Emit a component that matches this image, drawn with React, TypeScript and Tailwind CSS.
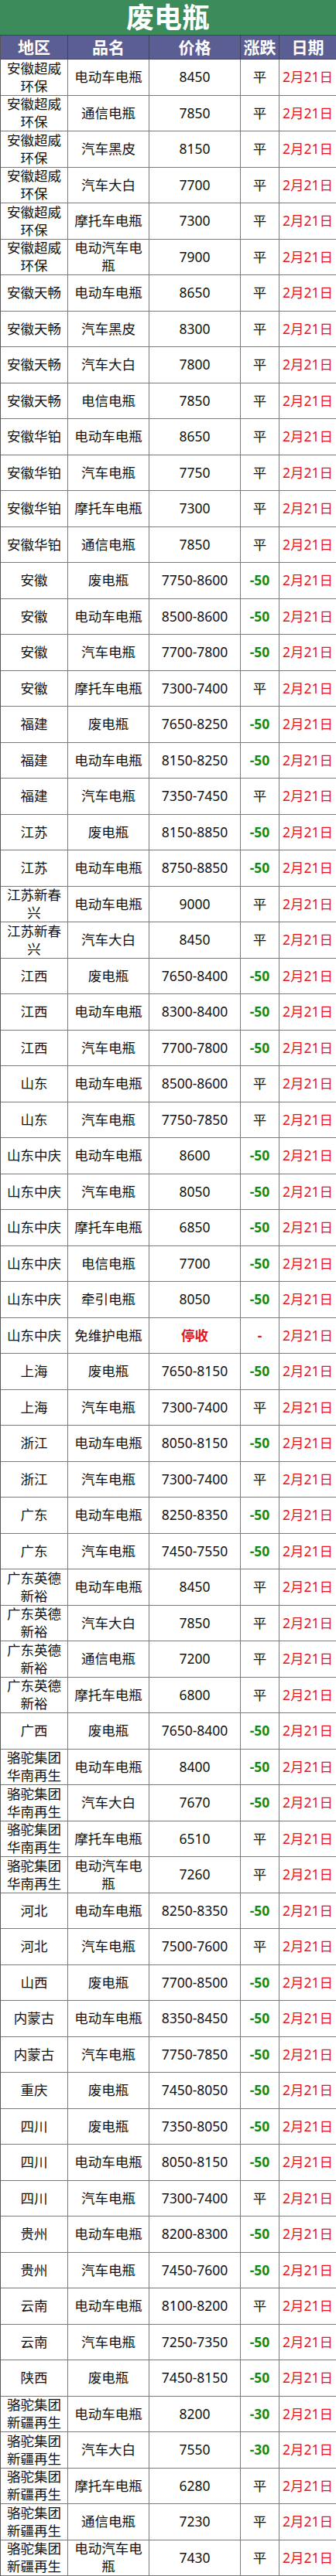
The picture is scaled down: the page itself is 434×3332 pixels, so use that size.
import React from 'react';

type Row = [string, string, string, string];

const rows: Row[] = [
  ['安徽超威环保', '电动车电瓶', '8450', '平'],
  ['安徽超威环保', '通信电瓶', '7850', '平'],
  ['安徽超威环保', '汽车黑皮', '8150', '平'],
  ['安徽超威环保', '汽车大白', '7700', '平'],
  ['安徽超威环保', '摩托车电瓶', '7300', '平'],
  ['安徽超威环保', '电动汽车电瓶', '7900', '平'],
  ['安徽天畅', '电动车电瓶', '8650', '平'],
  ['安徽天畅', '汽车黑皮', '8300', '平'],
  ['安徽天畅', '汽车大白', '7800', '平'],
  ['安徽天畅', '电信电瓶', '7850', '平'],
  ['安徽华铂', '电动车电瓶', '8650', '平'],
  ['安徽华铂', '汽车电瓶', '7750', '平'],
  ['安徽华铂', '摩托车电瓶', '7300', '平'],
  ['安徽华铂', '通信电瓶', '7850', '平'],
  ['安徽', '废电瓶', '7750-8600', '-50'],
  ['安徽', '电动车电瓶', '8500-8600', '-50'],
  ['安徽', '汽车电瓶', '7700-7800', '-50'],
  ['安徽', '摩托车电瓶', '7300-7400', '平'],
  ['福建', '废电瓶', '7650-8250', '-50'],
  ['福建', '电动车电瓶', '8150-8250', '-50'],
  ['福建', '汽车电瓶', '7350-7450', '平'],
  ['江苏', '废电瓶', '8150-8850', '-50'],
  ['江苏', '电动车电瓶', '8750-8850', '-50'],
  ['江苏新春兴', '电动车电瓶', '9000', '平'],
  ['江苏新春兴', '汽车大白', '8450', '平'],
  ['江西', '废电瓶', '7650-8400', '-50'],
  ['江西', '电动车电瓶', '8300-8400', '-50'],
  ['江西', '汽车电瓶', '7700-7800', '-50'],
  ['山东', '电动车电瓶', '8500-8600', '平'],
  ['山东', '汽车电瓶', '7750-7850', '平'],
  ['山东中庆', '电动车电瓶', '8600', '-50'],
  ['山东中庆', '汽车电瓶', '8050', '-50'],
  ['山东中庆', '摩托车电瓶', '6850', '-50'],
  ['山东中庆', '电信电瓶', '7700', '-50'],
  ['山东中庆', '牵引电瓶', '8050', '-50'],
  ['山东中庆', '免维护电瓶', '停收', '-'],
  ['上海', '废电瓶', '7650-8150', '-50'],
  ['上海', '汽车电瓶', '7300-7400', '平'],
  ['浙江', '电动车电瓶', '8050-8150', '-50'],
  ['浙江', '汽车电瓶', '7300-7400', '平'],
  ['广东', '电动车电瓶', '8250-8350', '-50'],
  ['广东', '汽车电瓶', '7450-7550', '-50'],
  ['广东英德新裕', '电动车电瓶', '8450', '平'],
  ['广东英德新裕', '汽车大白', '7850', '平'],
  ['广东英德新裕', '通信电瓶', '7200', '平'],
  ['广东英德新裕', '摩托车电瓶', '6800', '平'],
  ['广西', '废电瓶', '7650-8400', '-50'],
  ['骆驼集团华南再生', '电动车电瓶', '8400', '-50'],
  ['骆驼集团华南再生', '汽车大白', '7670', '-50'],
  ['骆驼集团华南再生', '摩托车电瓶', '6510', '平'],
  ['骆驼集团华南再生', '电动汽车电瓶', '7260', '平'],
  ['河北', '电动车电瓶', '8250-8350', '-50'],
  ['河北', '汽车电瓶', '7500-7600', '平'],
  ['山西', '废电瓶', '7700-8500', '-50'],
  ['内蒙古', '电动车电瓶', '8350-8450', '-50'],
  ['内蒙古', '汽车电瓶', '7750-7850', '-50'],
  ['重庆', '废电瓶', '7450-8050', '-50'],
  ['四川', '废电瓶', '7350-8050', '-50'],
  ['四川', '电动车电瓶', '8050-8150', '-50'],
  ['四川', '汽车电瓶', '7300-7400', '平'],
  ['贵州', '电动车电瓶', '8200-8300', '-50'],
  ['贵州', '汽车电瓶', '7450-7600', '-50'],
  ['云南', '电动车电瓶', '8100-8200', '平'],
  ['云南', '汽车电瓶', '7250-7350', '-50'],
  ['陕西', '废电瓶', '7450-8150', '-50'],
  ['骆驼集团新疆再生', '电动车电瓶', '8200', '-30'],
  ['骆驼集团新疆再生', '汽车大白', '7550', '-30'],
  ['骆驼集团新疆再生', '摩托车电瓶', '6280', '平'],
  ['骆驼集团新疆再生', '通信电瓶', '7230', '平'],
  ['骆驼集团新疆再生', '电动汽车电瓶', '7430', '平'],
];

const cell =
  'flex items-center justify-center text-center h-[46.5px] border-b border-r border-[#7a7a7a] leading-[23px]';

function changeClass(v: string) {
  if (v === '平') return 'text-[#111]';
  if (v === '-') return 'text-[#e8141c] font-bold';
  return 'text-[#138a13] font-bold';
}

export default function App() {
  return (
    <div
      className="w-[434px] bg-white text-[17.5px] text-[#111]"
      style={{ fontFamily: '"Noto Sans", "Noto Sans CJK SC", sans-serif' }}
    >
      {/* Title */}
      <div className="h-[46px] bg-[#3b8b5b] border-b border-[#2f4f3a] flex items-center justify-center">
        <span className="text-white text-[36px] font-bold leading-none">废电瓶</span>
      </div>

      <div className="grid grid-cols-[87px_105px_118px_50px_74px] border-l border-[#555]">
        {/* Header */}
        {['地区', '品名', '价格', '涨跌', '日期'].map((h) => (
          <div
            key={h}
            className="h-[31px] bg-[#5b5e93] border-b border-r border-[#3f3f5f] flex items-center justify-center text-white font-bold text-[21px] leading-none whitespace-nowrap"
          >
            {h}
          </div>
        ))}

        {rows.map((r, i) => (
          <React.Fragment key={i}>
            <div className={`${cell} px-1`}>{r[0]}</div>
            <div className={`${cell} px-1`}>{r[1]}</div>
            <div className={`${cell} whitespace-nowrap ${r[2] === '停收' ? 'text-[#e8141c] font-bold' : ''}`}>
              {r[2]}
            </div>
            <div className={`${cell} whitespace-nowrap ${changeClass(r[3])}`}>{r[3]}</div>
            <div className={`${cell} whitespace-nowrap text-[#e8141c] border-r-[#9a9a9a]`}>2月21日</div>
          </React.Fragment>
        ))}
      </div>
    </div>
  );
}
